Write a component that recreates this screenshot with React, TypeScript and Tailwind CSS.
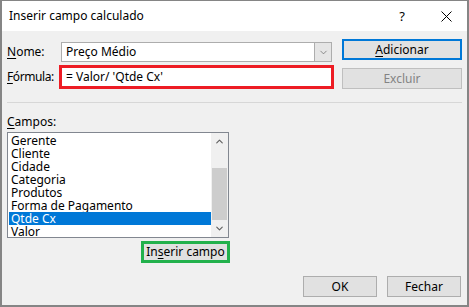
import { ChevronDown, ChevronUp } from "lucide-react";

// Dialog "Inserir campo calculado" (Excel pivot table)

const campos = ["Gerente", "Cliente", "Cidade", "Categoria", "Produtos", "Forma de Pagamento", "Qtde Cx", "Valor"];

function WinButton({ children, className = "" }: { children: React.ReactNode; className?: string }) {
    return (
        <div className={`flex items-center justify-center h-[21px] bg-[#e1e1e1] border border-[#adadad] text-[12px] ${className}`}>
            {children}
        </div>
    );
}

export default function App() {
    return (
        <div className="w-[469px] h-[307px] flex flex-col bg-[#f0f0f0] border-t border-x-2 border-b-2 border-[#858585] font-['Noto_Sans',sans-serif] text-[12px] text-black leading-4">
            {/* Title bar */}
            <div className="h-[30px] shrink-0 bg-white flex items-center pl-[7px]">
                <span className="text-[12px]">Inserir campo calculado</span>
                <span className="ml-auto text-[13px] mr-[36px]">?</span>
                <svg width="11" height="11" viewBox="0 0 11 11" className="mr-[15px]">
                    <path d="M0.5 0.5 L10.5 10.5 M10.5 0.5 L0.5 10.5" stroke="#000" strokeWidth="1" />
                </svg>
            </div>

            {/* Body */}
            <div className="flex flex-col px-[5px]">
                <div className="flex gap-[8px]">
                    <div className="w-[327px] flex flex-col">
                        <div className="flex items-center mt-[11px] h-[20px]">
                            <span className="w-[52px]"><span className="underline underline-offset-2">N</span>ome:</span>
                            <div className="ml-[2px] w-[271px] h-[20px] flex bg-white border border-[#adadad]">
                                <span className="flex-1 pl-[4px] leading-[18px]">Preço Médio</span>
                                <div className="w-[17px] flex items-center justify-center bg-[#e5e5e5] border-l border-[#adadad]">
                                    <ChevronDown size={11} strokeWidth={1.5} color="#606060" />
                                </div>
                            </div>
                        </div>
                        <div className="flex items-center mt-[3px] h-[24px]">
                            <span className="w-[52px] tracking-[-0.4px]"><span className="underline underline-offset-2">F</span>órmula:</span>
                            <div className="w-[275px] h-[24px] bg-white border-[3px] border-[#ed1c24] pl-[4px] leading-[18px]">
                                = Valor/ 'Qtde Cx'
                            </div>
                        </div>
                    </div>
                    <div className="w-[120px] flex flex-col">
                        <div className="mt-[8px] h-[21px] flex items-center justify-center bg-[#e1e1e1] border-2 border-[#0078d7]">
                            <span><span className="underline underline-offset-2">A</span>dicionar</span>
                        </div>
                        <WinButton className="mt-[8px] text-[#838383] border-[#bfbfbf]">Excluir</WinButton>
                    </div>
                </div>

                <div className="mt-[13px] h-px bg-[#d7d7d7]" />

                <div className="mt-[11px] h-[16px]"><span className="underline underline-offset-2">C</span>ampos:</div>

                {/* Listbox */}
                <div className="mt-[2px] w-[222px] h-[106px] flex bg-white border border-[#828790]">
                    <div className="flex-1 flex flex-col pt-[1px] pl-[1px]">
                        {campos.map((c) => (
                            <div
                                key={c}
                                className={`h-[13px] leading-[13px] pl-[2px] ${c === "Qtde Cx" ? "bg-[#0078d7] text-white" : ""}`}
                            >
                                {c}
                            </div>
                        ))}
                    </div>
                    <div className="w-[17px] flex flex-col bg-[#f0f0f0]">
                        <div className="h-[17px] flex items-center justify-center">
                            <ChevronUp size={11} strokeWidth={2.5} color="#606060" />
                        </div>
                        <div className="mt-[18px] mx-px h-[52px] bg-[#cdcdcd]" />
                        <div className="mt-auto h-[17px] flex items-center justify-center">
                            <ChevronDown size={11} strokeWidth={2.5} color="#606060" />
                        </div>
                    </div>
                </div>

                <div className="mt-[3px] ml-[134px] w-[89px] h-[22px] flex items-center justify-center bg-[#e1e1e1] border-[3px] border-[#22b14c]">
                    <span>In<span className="underline underline-offset-2">s</span>erir campo</span>
                </div>

                <div className="mt-[13px] flex justify-end gap-[10px] mr-[1px]">
                    <WinButton className="w-[74px]">OK</WinButton>
                    <WinButton className="w-[74px]">Fechar</WinButton>
                </div>
            </div>
        </div>
    );
}
